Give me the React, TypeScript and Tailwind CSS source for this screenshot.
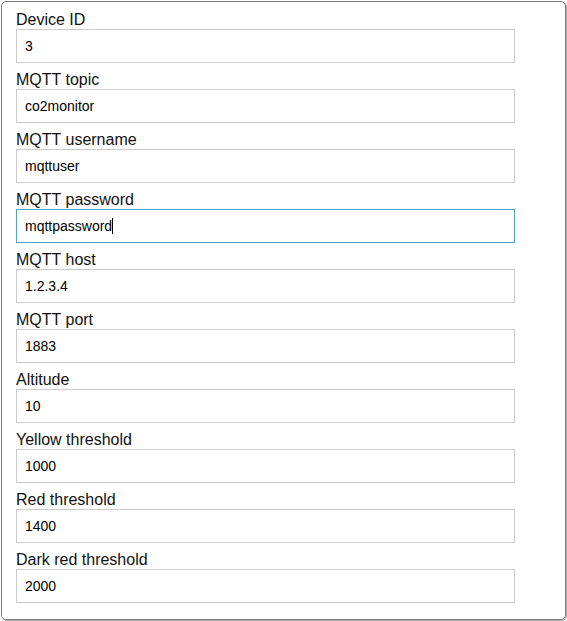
import React from 'react';

const FIELDS = [
  { label: 'Device ID', value: '3' },
  { label: 'MQTT topic', value: 'co2monitor' },
  { label: 'MQTT username', value: 'mqttuser' },
  { label: 'MQTT password', value: 'mqttpassword', focused: true },
  { label: 'MQTT host', value: '1.2.3.4' },
  { label: 'MQTT port', value: '1883' },
  { label: 'Altitude', value: '10' },
  { label: 'Yellow threshold', value: '1000' },
  { label: 'Red threshold', value: '1400' },
  { label: 'Dark red threshold', value: '2000' },
];

const App: React.FC = () => {
  return (
    <div className="p-px bg-white min-h-[621px]" style={{ fontFamily: '"Liberation Sans", Arial, sans-serif' }}>
      <div className="w-[565px] border border-[#7a7a7a] rounded-[5px] shadow-[1px_1px_1px_rgba(0,0,0,0.35)] pt-[7px] pb-4 pl-[14px] pr-[50px] flex flex-col gap-[6px]">
        {FIELDS.map((f) => (
          <div key={f.label} className="flex flex-col">
            <label className="block text-[16px] leading-[18px] pt-[2px] text-[#111]">{f.label}</label>
            {f.focused ? (
              <div className="w-[499px] h-[34px] border border-[#4fa8bf] flex items-center pl-2 text-[14px] text-black">
                <span>{f.value}</span>
                <span className="inline-block w-px h-[16px] bg-black" />
              </div>
            ) : (
              <input
                readOnly
                defaultValue={f.value}
                className="w-[499px] h-[34px] border border-[#cccccc] px-2 text-[14px] text-black outline-none"
                style={{ fontFamily: '"Liberation Sans", Arial, sans-serif' }}
              />
            )}
          </div>
        ))}
      </div>
    </div>
  );
};

export default App;
